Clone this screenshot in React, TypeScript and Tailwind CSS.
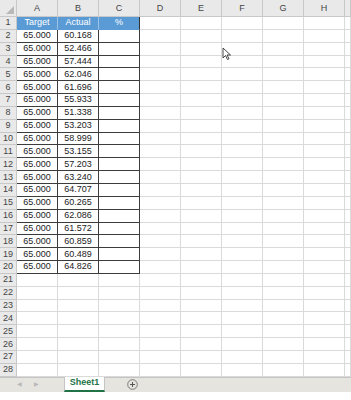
import React from "react";

const B = [
  "60.168","52.466","57.444","62.046","61.696","55.933","51.338","53.203","58.999","53.155",
  "57.203","63.240","64.707","60.265","62.086","61.572","60.859","60.489","64.826",
];
const COLS = ["A","B","C","D","E","F","G","H",""];

export default function App() {
  const rows = Array.from({ length: 28 }, (_, i) => i + 1);
  return (
    <div className="w-[351px] h-[400px] bg-white overflow-hidden flex flex-col relative" style={{ fontFamily: '"Liberation Sans", Arial, sans-serif' }}>
      <div className="grid grid-cols-[17px_repeat(8,41px)_6px] grid-rows-[17px_repeat(28,12.857px)] text-[9px] leading-none text-[#222]">
        {/* header row */}
        <div className="bg-[#e9e9e9] border-r border-b border-[#c8c8c8] relative">
          <div className="absolute right-[2px] bottom-[2px] w-0 h-0 border-l-[8px] border-l-transparent border-b-[8px] border-b-[#b8b8b8]" />
        </div>
        {COLS.map((c, i) => (
          <div key={i} className="bg-[#e9e9e9] border-r border-b border-[#c8c8c8] flex items-end justify-center pb-[3px] text-[#444]">{c}</div>
        ))}
        {rows.map((r) => (
          <React.Fragment key={r}>
            <div className="bg-[#e9e9e9] border-r border-b border-[#c8c8c8] flex items-center justify-center text-[#444]">{r}</div>
            {COLS.map((_, ci) => {
              if (r === 1 && ci < 3) {
                return (
                  <div key={ci} className={`bg-[#5b9bd5] text-white flex items-center justify-center border-b border-[#5b9bd5] ${ci === 2 ? "border-r border-r-[#333]" : "border-r border-r-[#9cc2e5]"}`}>
                    {["Target", "Actual", "%"][ci]}
                  </div>
                );
              }
              if (r >= 2 && r <= 20 && ci < 3) {
                return (
                  <div key={ci} className="border-r border-b border-[#3c3c3c] flex items-center justify-center">
                    {ci === 0 ? "65.000" : ci === 1 ? B[r - 2] : ""}
                  </div>
                );
              }
              return <div key={ci} className="border-r border-b border-[#dadada]" />;
            })}
          </React.Fragment>
        ))}
      </div>
      {/* bottom bar */}
      <div className="h-[15px] bg-[#e6e4de] border-t border-[#c4c4c4] flex items-stretch text-[9px]">
        <div className="w-[64px] flex items-center pl-[17px] gap-[12px] text-[#b8b8b8] text-[6px]">
          <span>◀</span>
          <span>▶</span>
        </div>
        <div className="w-[41px] bg-white border-x border-[#c4c4c4] border-b-2 border-b-[#217346] flex items-center justify-center font-bold text-[#217346] -mt-px">Sheet1</div>
        <div className="flex items-center pl-[22px]">
          <svg width="11" height="11" viewBox="0 0 11 11">
            <circle cx="5.5" cy="5.5" r="4.8" fill="none" stroke="#7a7a7a" strokeWidth="1" />
            <path d="M5.5 3v5M3 5.5h5" stroke="#555" strokeWidth="1" />
          </svg>
        </div>
      </div>
      <div className="flex-1 bg-white" />
      {/* mouse cursor */}
      <svg className="absolute left-[222px] top-[47px]" width="10" height="14" viewBox="0 0 10 14">
        <path d="M1 1 L1 11 L3.5 8.5 L5.5 12.5 L7 11.8 L5 8 L8.5 8 Z" fill="white" stroke="#333" strokeWidth="0.9" strokeLinejoin="round" />
      </svg>
    </div>
  );
}
